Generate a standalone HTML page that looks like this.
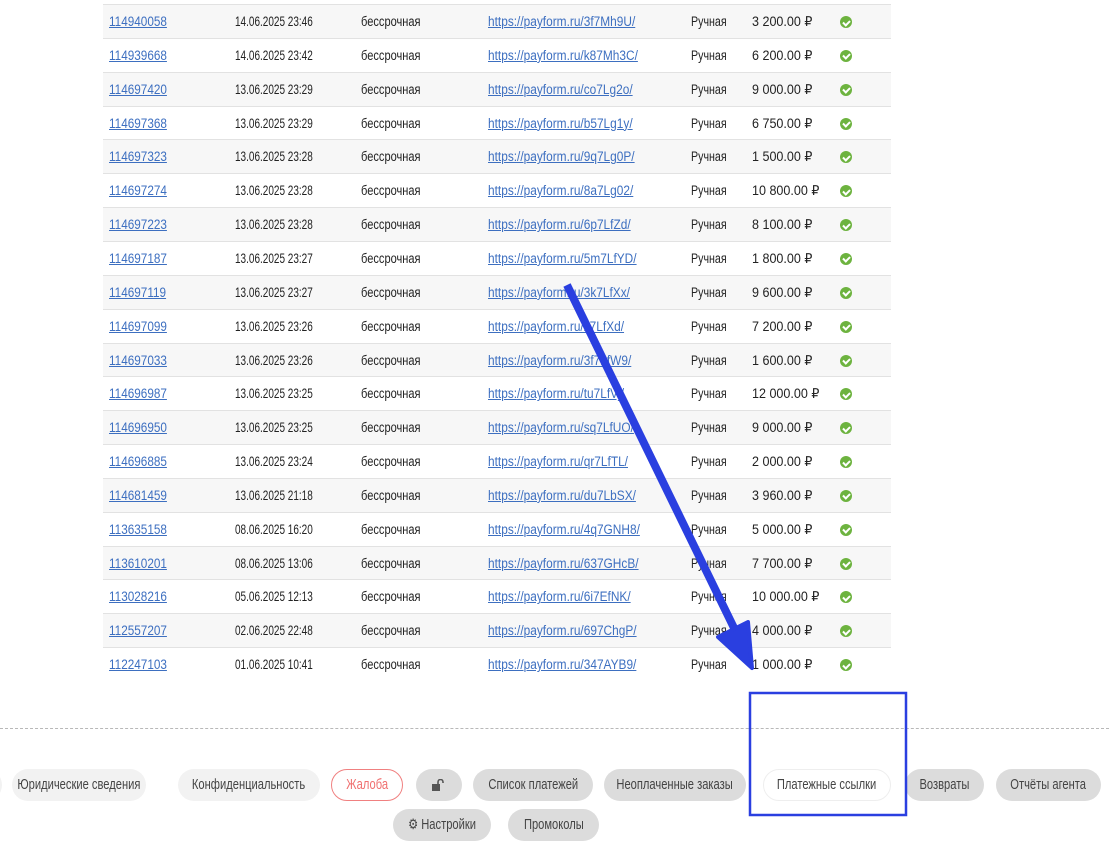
<!DOCTYPE html>
<html><head><meta charset="utf-8">
<style>
*{margin:0;padding:0;box-sizing:border-box}
body{width:1109px;height:828px;overflow:hidden;background:#fff;position:relative;font-family:"Liberation Sans",sans-serif;color:#222}
.row{position:absolute;left:103px;width:788px;height:34px;border-top:1px solid #e2e2e2}
.row.g{background:#f7f7f7}
.c{position:absolute;top:0;line-height:33px;font-size:13.5px;white-space:nowrap;transform-origin:left center}
a{color:#3d6fc0;text-decoration:underline}
.chk{position:absolute;left:737px;top:11px;width:12px;height:12px;border-radius:50%;background:#6db33f}
.chk:after{content:"";position:absolute;left:3.5px;top:2.5px;width:3px;height:5px;border:solid #fff;border-width:0 2px 2px 0;transform:rotate(45deg)}
.dash{position:absolute;left:0;top:728px;width:1109px;border-top:1px dashed #b8b8b8}
.btn{position:absolute;height:32px;border-radius:16px;background:#f2f2f2;font-size:14.5px;color:#444;display:flex;align-items:center;justify-content:center;white-space:nowrap}
.btn span{display:inline-block;transform:scaleX(0.77)}
.d{background:#dcdcdc}
</style></head><body>
<div id="t"></div>
<script>
var d=[["114940058","14.06.2025 23:46","3f7Mh9U","3 200.00"],["114939668","14.06.2025 23:42","k87Mh3C","6 200.00"],["114697420","13.06.2025 23:29","co7Lg2o","9 000.00"],["114697368","13.06.2025 23:29","b57Lg1y","6 750.00"],["114697323","13.06.2025 23:28","9q7Lg0P","1 500.00"],["114697274","13.06.2025 23:28","8a7Lg02","10 800.00"],["114697223","13.06.2025 23:28","6p7LfZd","8 100.00"],["114697187","13.06.2025 23:27","5m7LfYD","1 800.00"],["114697119","13.06.2025 23:27","3k7LfXx","9 600.00"],["114697099","13.06.2025 23:26","z7LfXd","7 200.00"],["114697033","13.06.2025 23:26","3f7LfW9","1 600.00"],["114696987","13.06.2025 23:25","tu7LfVj","12 000.00"],["114696950","13.06.2025 23:25","sq7LfUO","9 000.00"],["114696885","13.06.2025 23:24","qr7LfTL","2 000.00"],["114681459","13.06.2025 21:18","du7LbSX","3 960.00"],["113635158","08.06.2025 16:20","4q7GNH8","5 000.00"],["113610201","08.06.2025 13:06","637GHcB","7 700.00"],["113028216","05.06.2025 12:13","6i7EfNK","10 000.00"],["112557207","02.06.2025 22:48","697ChgP","4 000.00"],["112247103","01.06.2025 10:41","347AYB9","1 000.00"]];
var h="";
function c(l,s,t){return '<div class="c" style="left:'+l+'px;transform:scaleX('+s+')">'+t+'</div>';}
d.forEach(function(r,i){var top=4+i*33.85;
h+='<div class="row'+(i%2==0?' g':'')+'" style="top:'+top+'px">'+c(6,0.87,'<a>'+r[0]+'</a>')+c(132,0.74,r[1])+c(258,0.82,'бессрочная')+c(385,0.88,'<a>https://payform.ru/'+r[2]+'/</a>')+c(588,0.79,'Ручная')+c(649,0.93,r[3]+' ₽')+'<div class="chk"></div></div>';});
document.getElementById("t").innerHTML=h;
</script>
<div class="dash"></div>
<div class="btn" style="left:-40px;top:769px;width:42px"></div>
<div class="btn" style="left:12px;top:769px;width:134px"><span>Юридические сведения</span></div>
<div class="btn" style="left:178px;top:769px;width:142px"><span>Конфиденциальность</span></div>
<div class="btn" style="left:331px;top:769px;width:72px;background:#fff;border:1px solid #f08080;color:#f07070"><span>Жалоба</span></div>
<div class="btn d" style="left:416px;top:769px;width:46px"><svg width="14" height="12" viewBox="0 0 14 12"><rect x="0" y="5" width="8" height="7" fill="#555"/><path d="M6 5V3a2.5 2.5 0 0 1 5 0v1" stroke="#555" stroke-width="1.6" fill="none"/></svg></div>
<div class="btn d" style="left:473px;top:769px;width:120px"><span>Список платежей</span></div>
<div class="btn d" style="left:604px;top:769px;width:142px"><span>Неоплаченные заказы</span></div>
<div class="btn" style="left:763px;top:769px;width:128px;background:#fff;border:1px solid #eee"><span>Платежные ссылки</span></div>
<div class="btn d" style="left:905px;top:769px;width:79px"><span>Возвраты</span></div>
<div class="btn d" style="left:996px;top:769px;width:105px"><span>Отчёты агента</span></div>
<div class="btn d" style="left:393px;top:809px;width:98px"><span>⚙ Настройки</span></div>
<div class="btn d" style="left:508px;top:809px;width:91px"><span>Промоколы</span></div>
<svg style="position:absolute;left:0;top:0" width="1109" height="828">
<line x1="567" y1="285" x2="735" y2="630" stroke="#2a3fe0" stroke-width="8"/>
<polygon points="752,668 748,622 718,637" fill="#2a3fe0" stroke="#2a3fe0" stroke-width="4" stroke-linejoin="round"/>
<rect x="750" y="693" width="156" height="122" fill="none" stroke="#2a3fe0" stroke-width="2.5"/>
</svg>
</body></html>
